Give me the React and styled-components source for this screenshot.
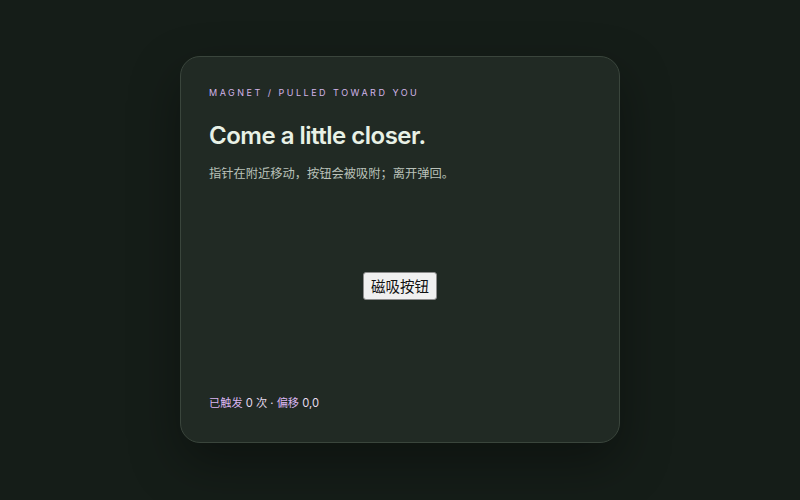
import { useState } from 'react';
import styled, { createGlobalStyle } from 'styled-components';

const GlobalStyle = createGlobalStyle`
	html, body {
		margin: 0;
		height: 100%;
		background: #151d18;
	}
	#root {
		height: 100%;
	}
`;

const Page = styled.div`
	height: 500px;
	display: flex;
	justify-content: center;
	align-items: flex-start;
	padding-top: 56px;
	box-sizing: border-box;
	font-family: Inter, 'Noto Sans CJK SC', sans-serif;
`;

const Card = styled.section`
	width: 440px;
	height: 387px;
	box-sizing: border-box;
	padding: 30px 28px 30px 28px;
	border-radius: 20px;
	background: #212a24;
	border: 1px solid #3a453c;
	box-shadow: 0 20px 50px rgba(0, 0, 0, 0.35);
	display: flex;
	flex-direction: column;
`;

const Eyebrow = styled.div`
	font-size: 9px;
	letter-spacing: 2.5px;
	text-transform: uppercase;
	color: #d2b4e8;
	line-height: 12px;
`;

const Title = styled.h1`
	margin: 21px 0 0;
	font-size: 24px;
	font-weight: 600;
	letter-spacing: -0.5px;
	color: #e8f1e6;
	line-height: 32px;
`;

const Lede = styled.p`
	margin: 13px 0 0;
	font-size: 12.25px;
	color: #b9c1b9;
	line-height: 18px;
`;

const Stage = styled.div`
	flex: 1;
	display: flex;
	align-items: center;
	justify-content: center;
	padding-bottom: 6px;
`;

const MagnetButton = styled.button`
	font-family: 'Noto Sans CJK SC', sans-serif;
	font-size: 14.5px;
	line-height: 20px;
	padding: 3px 7px;
	background: #f0f0f0;
	color: #111;
	border: 1px solid #8d8d8d;
	border-radius: 3px;
	cursor: pointer;
`;

const Status = styled.div`
	font-size: 11.2px;
	line-height: 18px;
	color: #e6dcef;
	& b {
		font-weight: 400;
		color: #dab6f2;
	}
`;

export default function App() {
	const [hits] = useState(0);
	const [offset] = useState({ x: 0, y: 0 });

	return (
		<>
			<GlobalStyle />
			<Page>
				<Card>
					<Eyebrow>Magnet / pulled toward you</Eyebrow>
					<Title>Come a little closer.</Title>
					<Lede>指针在附近移动，按钮会被吸附；离开弹回。</Lede>
					<Stage>
						<MagnetButton>磁吸按钮</MagnetButton>
					</Stage>
					<Status>
						<b>已触发</b> {hits} 次 · <b>偏移</b> {offset.x},{offset.y}
					</Status>
				</Card>
			</Page>
		</>
	);
}
